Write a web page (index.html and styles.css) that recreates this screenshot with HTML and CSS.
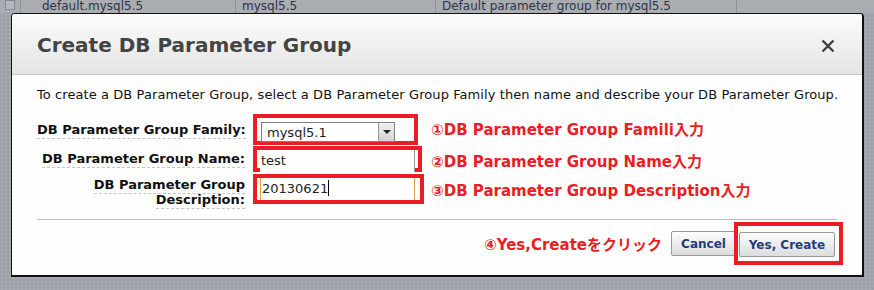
FILE: index.html
```html
<!DOCTYPE html>
<html lang="ja">
<head>
  <meta charset="UTF-8">
  <title>Create DB Parameter Group</title>
  <link rel="stylesheet" href="styles.css">
</head>
<body>
  <div class="table-row">
    <div class="cell check"><span class="box"></span></div>
    <div class="cell name">default.mysql5.5</div>
    <div class="cell family">mysql5.5</div>
    <div class="cell desc">Default parameter group for mysql5.5</div>
    <div class="cell rest"></div>
  </div>

  <div class="dialog">
    <div class="dialog-header">
      <h2>Create DB Parameter Group</h2>
      <svg class="close" width="14" height="14" viewBox="0 0 14 14">
        <path d="M1.5 1.5 L12.5 12.5 M12.5 1.5 L1.5 12.5" stroke="#404040" stroke-width="2.4" fill="none"/>
      </svg>
    </div>

    <div class="dialog-body">
      <p class="intro">To create a DB Parameter Group, select a DB Parameter Group Family then name and describe your DB Parameter Group.</p>

      <div class="form">
        <div class="row row-family">
          <label class="label"><span>DB Parameter Group Family:</span></label>
          <div class="mark mark-family">
            <div class="select">
              <span>mysql5.1</span>
              <span class="arrow"></span>
            </div>
          </div>
          <div class="note">①DB Parameter Group Famili入力</div>
        </div>

        <div class="row row-name">
          <label class="label"><span>DB Parameter Group Name:</span></label>
          <div class="mark mark-name">
            <div class="input">test</div>
          </div>
          <div class="note">②DB Parameter Group Name入力</div>
        </div>

        <div class="row row-desc">
          <label class="label"><span>DB Parameter Group</span><br><span>Description:</span></label>
          <div class="mark mark-desc">
            <div class="input focused">20130621<i class="caret"></i></div>
          </div>
          <div class="note">③DB Parameter Group Description入力</div>
        </div>
      </div>

      <div class="footer">
        <div class="note">④Yes,Createをクリック</div>
        <button class="btn btn-cancel">Cancel</button>
        <div class="mark mark-btn">
          <button class="btn btn-create">Yes, Create</button>
        </div>
      </div>
    </div>
  </div>
</body>
</html>
```

FILE: styles.css
```css
* {
  margin: 0;
  padding: 0;
  box-sizing: border-box;
}

body {
  width: 874px;
  height: 290px;
  overflow: hidden;
  font-family: 'DejaVu Sans', Verdana, sans-serif;
  background-color: #9da2a8;
  background-image: radial-gradient(rgba(255,255,255,0.12) 1px, transparent 1px);
  background-size: 4px 4px;
  position: relative;
}

.table-row {
  display: flex;
  height: 13px;
  background-color: #a9adb2;
  color: #30324a;
  font-size: 12px;
  line-height: 12px;
}

.cell {
  border-right: 1px solid #8d9197;
  padding-left: 6px;
  white-space: nowrap;
}

.check { width: 21px; padding-left: 5px; }
.check .box {
  display: block;
  width: 10px;
  height: 10px;
  border: 1px solid #868a90;
  background: #b4b7bb;
}
.name { width: 215px; padding-left: 21px; }
.family { width: 200px; }
.desc { width: 301px; }
.rest { flex: 1; border-right: none; }

/* modal dialog over the table */
.dialog {
  position: absolute;
  left: 11px;
  top: 13px;
  width: 853px;
  height: 264px;
  background: #fdfefd;
  border: 1px solid #111;
  border-bottom-width: 2px;
  border-right-width: 2px;
  border-radius: 4px 4px 0 0;
  overflow: hidden;
}

.dialog-header {
  height: 61px;
  background: linear-gradient(to bottom, #fcfcfc, #e4e4e4);
  border-bottom: 1px solid #c8c8c8;
  display: flex;
  align-items: center;
  justify-content: space-between;
  padding: 0 27px 0 25px;
}

.dialog-header h2 {
  font-size: 20px;
  font-weight: bold;
  color: #444;
  margin-top: 2px;
}

.close {
  margin-top: 3px;
}

.dialog-body {
  padding: 0 25px 0 25px;
}

.intro {
  font-size: 13px;
  letter-spacing: 0.08px;
  color: #111;
  margin-top: 12px;
  height: 27px;
  white-space: nowrap;
}

.form {
  display: flex;
  flex-direction: column;
  border-bottom: 1px solid #bdbdbd;
  padding-bottom: 8px;
}

.row {
  display: grid;
  grid-template-columns: 208px 176px auto;
  align-items: start;
}

.label {
  text-align: right;
  font-size: 13px;
  font-weight: bold;
  color: #111;
  line-height: 15px;
  white-space: nowrap;
}

.label span {
  border-bottom: 1px dashed #c4c4c4;
  padding-bottom: 1px;
}

.row-family { height: 32px; padding-top: 5px; }
.row-name { height: 31px; padding-top: 2px; }
.row-desc { height: 34px; }

.row-family .label { padding-top: 3px; }
.row-name .label { padding-top: 3px; }
.row-desc .label { padding-top: 0; }

.mark {
  border: 4px solid #ec1c24;
  margin-left: 8px;
}

.mark-family {
  width: 165px;
  height: 31px;
  margin-top: -5px;
  padding: 4px 0 0 4px;
}

.mark-name {
  width: 169px;
  height: 26px;
  margin-top: -2px;
  padding: 0 0 0 3px;
}

.mark-desc {
  width: 171px;
  height: 30px;
  margin-top: -3px;
  padding: 0 0 0 3px;
}

.select {
  width: 134px;
  height: 20px;
  border: 1px solid #7f7f7f;
  background: #fff;
  display: flex;
  justify-content: space-between;
  align-items: center;
  font-size: 13px;
  color: #222;
  padding-left: 5px;
}

.arrow {
  width: 16px;
  height: 18px;
  background: linear-gradient(#f0f0f0, #d2d2d2);
  border-left: 1px solid #999;
  position: relative;
}

.arrow::after {
  content: "";
  position: absolute;
  left: 4px;
  top: 7px;
  border-left: 4px solid transparent;
  border-right: 4px solid transparent;
  border-top: 4px solid #222;
}

.input {
  width: 155px;
  height: 22px;
  background: #fff;
  border-right: 1px solid #9a9a9a;
  font-size: 13px;
  color: #222;
  line-height: 22px;
  padding-left: 1px;
}

.input.focused {
  border-left: 1px solid #e2a447;
  border-right: 1px solid #e2a447;
}

.caret {
  display: inline-block;
  width: 1px;
  height: 16px;
  background: #000;
  vertical-align: -3px;
}

.note {
  font-family: 'DejaVu Sans', 'Noto Sans CJK JP', sans-serif;
  font-size: 15px;
  font-weight: bold;
  color: #ec1c24;
  padding-left: 10px;
  white-space: nowrap;
}

.row-family .note { margin-top: -1px; }
.row-name .note { margin-top: 2px; }
.row-desc .note { margin-top: 2px; }

.footer {
  display: flex;
  justify-content: flex-end;
  align-items: center;
  padding-top: 2px;
  margin-right: -6px;
}

.footer .note {
  padding: 0 9px 0 0;
}

.btn {
  font-family: 'DejaVu Sans', Verdana, sans-serif;
  font-size: 12px;
  font-weight: bold;
  color: #1e3f7a;
  height: 25px;
  border: 1px solid #999;
  border-radius: 2px;
  background: linear-gradient(#fefefe, #dcdcdc);
}

.btn-cancel {
  width: 65px;
}

.mark-btn {
  margin-left: -2px;
  padding: 6px 4px 4px 1px;
}

.btn-create {
  width: 96px;
}
```
